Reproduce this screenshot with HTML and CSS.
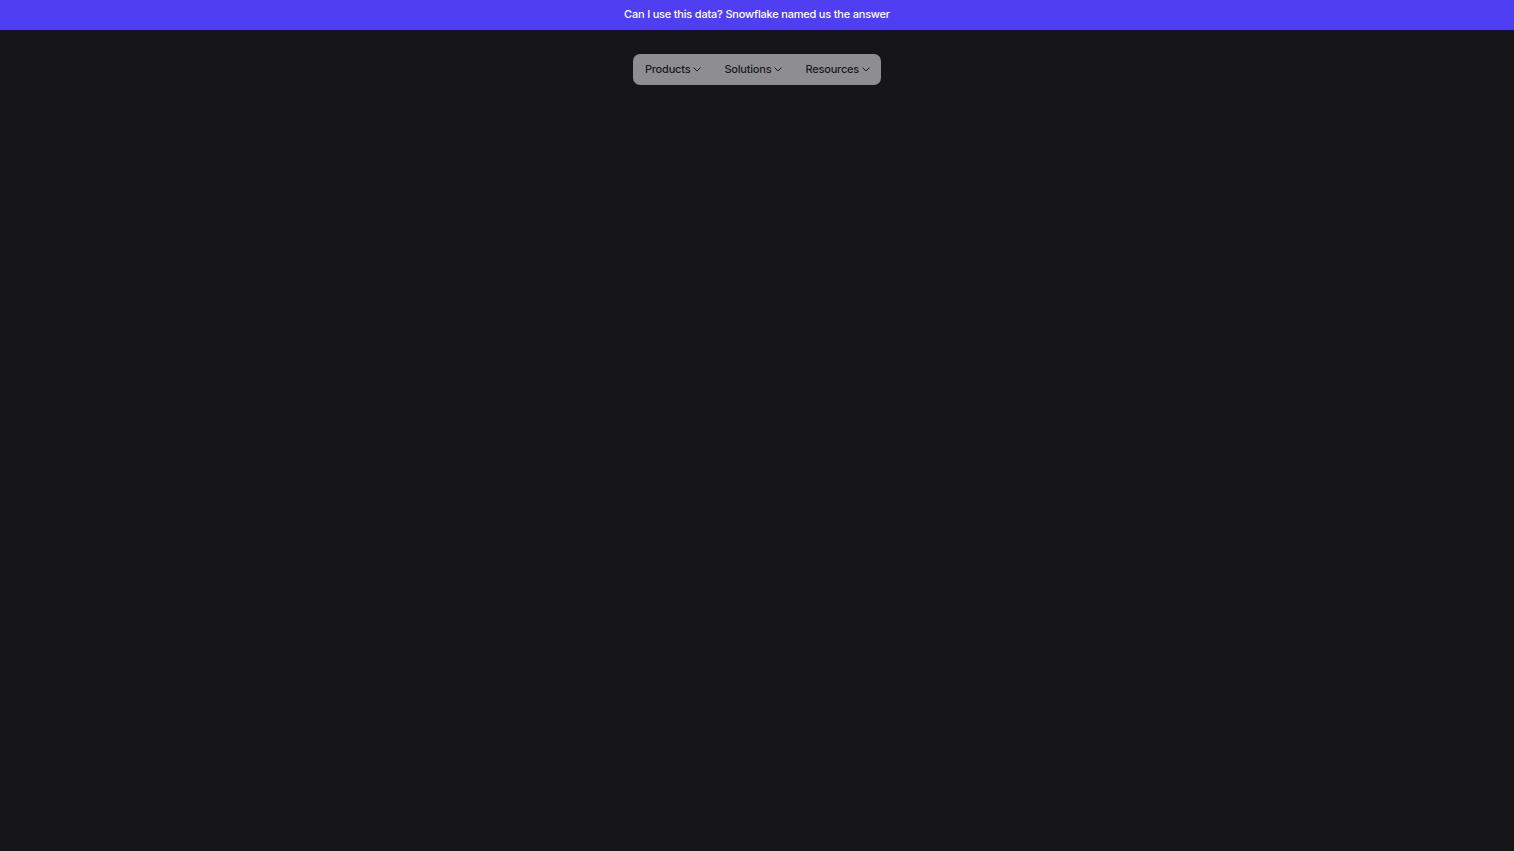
FILE: index.html
```html
<!DOCTYPE html>
<html lang="en">
<head>
<meta charset="utf-8">
<title>Nav</title>
<link rel="stylesheet" href="styles.css">
</head>
<body>
<div class="banner">Can I use this data? Snowflake named us the answer</div>
<header class="header">
  <nav class="nav">
    <span class="nav-item">Products <svg class="chev" viewBox="0 0 8 5" width="8" height="5"><path d="M0.5 0.5 L4 4 L7.5 0.5" fill="none" stroke="currentColor" stroke-width="1"/></svg></span>
    <span class="nav-item">Solutions <svg class="chev" viewBox="0 0 8 5" width="8" height="5"><path d="M0.5 0.5 L4 4 L7.5 0.5" fill="none" stroke="currentColor" stroke-width="1"/></svg></span>
    <span class="nav-item">Resources <svg class="chev" viewBox="0 0 8 5" width="8" height="5"><path d="M0.5 0.5 L4 4 L7.5 0.5" fill="none" stroke="currentColor" stroke-width="1"/></svg></span>
  </nav>
</header>
</body>
</html>
```
FILE: styles.css
```css
html, body {
  margin: 0;
  padding: 0;
}
body {
  background: #161618;
  min-height: 851px;
  font-family: Inter, "Liberation Sans", sans-serif;
}
.banner {
  height: 30px;
  box-sizing: border-box;
  padding-bottom: 2px;
  background: #4f3ef2;
  color: #ffffff;
  font-size: 11px;
  font-weight: 500;
  display: flex;
  align-items: center;
  justify-content: center;
  letter-spacing: -0.2px;
}
.header {
  display: flex;
  justify-content: center;
  padding-top: 24px;
}
.nav {
  display: flex;
  align-items: center;
  gap: 23px;
  height: 31px;
  box-sizing: border-box;
  padding: 0 11px 2px 12px;
  background: #8e8e90;
  border-radius: 7px;
}
.nav-item {
  display: flex;
  align-items: center;
  gap: 3px;
  font-size: 11px;
  font-weight: 500;
  color: #1a1a1c;
  letter-spacing: -0.2px;
}
.chev {
  margin-top: 2px;
}
```
